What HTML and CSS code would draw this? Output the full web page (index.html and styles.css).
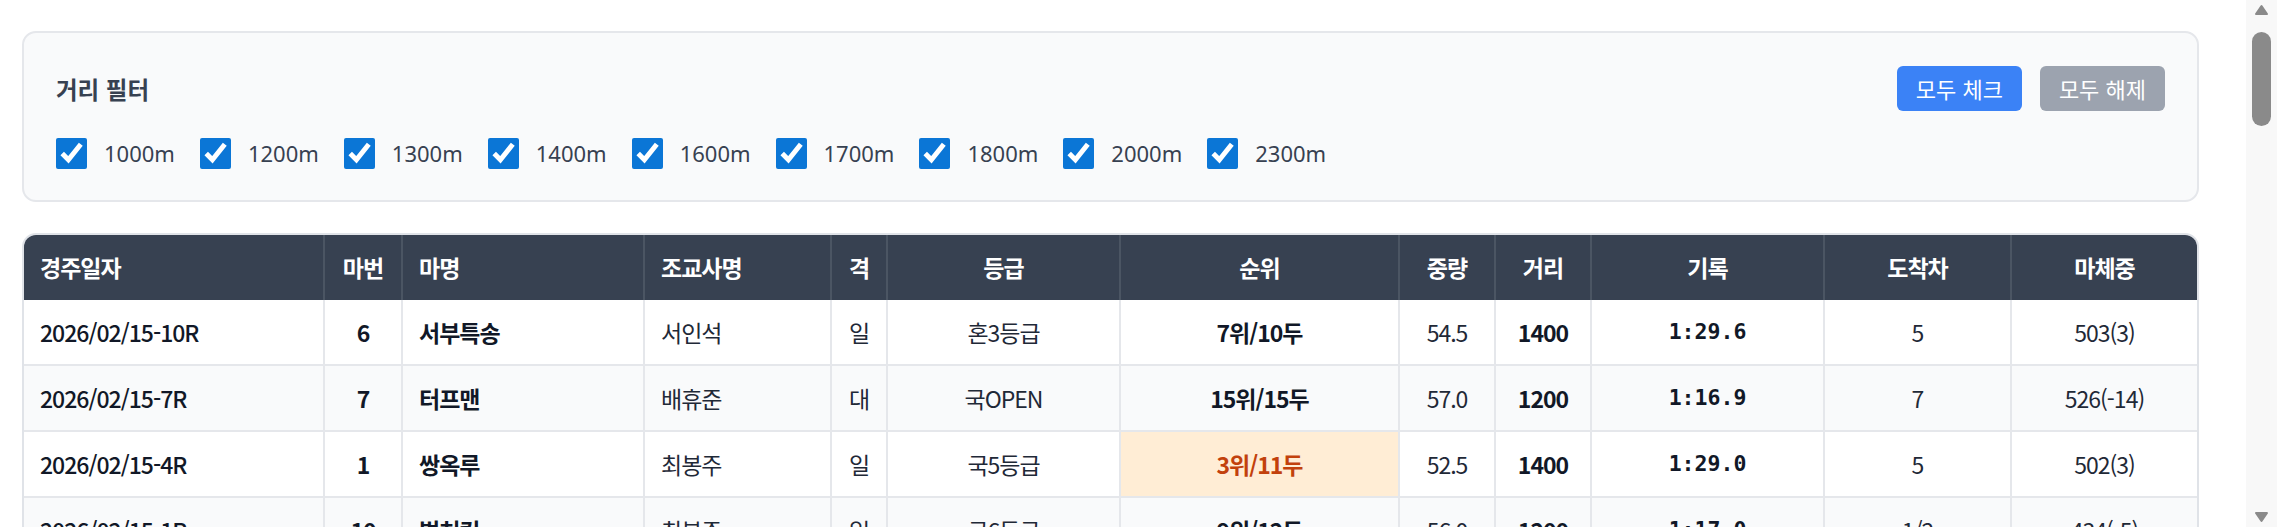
FILE: index.html
```html
<!DOCTYPE html>
<html lang="ko">
	<head>
		<meta charset="utf-8">
		<title>경주 기록</title>
		<link rel="stylesheet" href="styles.css">
	</head>
	<body>
		<div class="page">
			<div class="filter">
				<div class="filter-head">
					<span class="filter-title">거리 필터</span>
					<div class="filter-btns">
						<button class="btn btn-blue">모두 체크</button>
						<button class="btn btn-gray">모두 해제</button>
					</div>
				</div>
				<div class="dist-list">
					<label class="dist"><input type="checkbox" checked>1000m</label>
					<label class="dist"><input type="checkbox" checked>1200m</label>
					<label class="dist"><input type="checkbox" checked>1300m</label>
					<label class="dist"><input type="checkbox" checked>1400m</label>
					<label class="dist"><input type="checkbox" checked>1600m</label>
					<label class="dist"><input type="checkbox" checked>1700m</label>
					<label class="dist"><input type="checkbox" checked>1800m</label>
					<label class="dist"><input type="checkbox" checked>2000m</label>
					<label class="dist"><input type="checkbox" checked>2300m</label>
				</div>
			</div>

			<div class="result-wrap">
				<table class="result">
					<colgroup>
						<col class="w-date"><col class="w-no"><col class="w-horse"><col class="w-trainer">
						<col class="w-gyeok"><col class="w-grade"><col class="w-rank"><col class="w-wt">
						<col class="w-dist"><col class="w-time"><col class="w-gap"><col>
					</colgroup>
					<thead>
						<tr>
							<th class="l">경주일자</th><th>마번</th><th class="l">마명</th><th class="l">조교사명</th>
							<th>격</th><th>등급</th><th>순위</th><th>중량</th>
							<th>거리</th><th>기록</th><th>도착차</th><th>마체중</th>
						</tr>
					</thead>
					<tbody>
						<tr><td class="l date">2026/02/15-10R</td><td class="b">6</td><td class="l horse">서부특송</td><td class="l">서인석</td><td>일</td><td>혼3등급</td><td class="b">7위/10두</td><td>54.5</td><td class="b">1400</td><td class="time">1:29.6</td><td>5</td><td>503(3)</td></tr>
						<tr><td class="l date">2026/02/15-7R</td><td class="b">7</td><td class="l horse">터프맨</td><td class="l">배휴준</td><td>대</td><td>국OPEN</td><td class="b">15위/15두</td><td>57.0</td><td class="b">1200</td><td class="time">1:16.9</td><td>7</td><td>526(-14)</td></tr>
						<tr><td class="l date">2026/02/15-4R</td><td class="b">1</td><td class="l horse">쌍옥루</td><td class="l">최봉주</td><td>일</td><td>국5등급</td><td class="b top">3위/11두</td><td>52.5</td><td class="b">1400</td><td class="time">1:29.0</td><td>5</td><td>502(3)</td></tr>
						<tr><td class="l date">2026/02/15-1R</td><td class="b">10</td><td class="l horse">벌처킹</td><td class="l">최봉주</td><td>일</td><td>국6등급</td><td class="b">9위/12두</td><td>56.0</td><td class="b">1200</td><td class="time">1:17.0</td><td>1/2</td><td>434(-5)</td></tr>
						<tr><td class="l date">2026/02/14-11R</td><td class="b">3</td><td class="l horse">원더풀블레이드</td><td class="l">서인석</td><td>일</td><td>혼2등급</td><td class="b">4위/12두</td><td>55.0</td><td class="b">1600</td><td class="time">1:42.3</td><td>2</td><td>488(1)</td></tr>
						<tr><td class="l date">2026/02/14-8R</td><td class="b">5</td><td class="l horse">금빛질주</td><td class="l">배휴준</td><td>일</td><td>국4등급</td><td class="b top">1위/11두</td><td>54.0</td><td class="b">1300</td><td class="time">1:22.7</td><td>목</td><td>471(-2)</td></tr>
						<tr><td class="l date">2026/02/14-5R</td><td class="b">8</td><td class="l horse">한라의별</td><td class="l">최봉주</td><td>일</td><td>국5등급</td><td class="b">6위/10두</td><td>53.0</td><td class="b">1000</td><td class="time">1:02.4</td><td>3</td><td>455(4)</td></tr>
						<tr><td class="l date">2026/02/08-9R</td><td class="b">2</td><td class="l horse">서부특송</td><td class="l">서인석</td><td>일</td><td>혼3등급</td><td class="b top">2위/12두</td><td>54.5</td><td class="b">1400</td><td class="time">1:28.9</td><td>1</td><td>500(-2)</td></tr>
						<tr><td class="l date">2026/02/08-6R</td><td class="b">11</td><td class="l horse">바람의언덕</td><td class="l">배휴준</td><td>일</td><td>국3등급</td><td class="b">8위/13두</td><td>55.5</td><td class="b">1800</td><td class="time">1:56.1</td><td>6</td><td>492(0)</td></tr>
						<tr><td class="l date">2026/02/07-10R</td><td class="b">4</td><td class="l horse">터프맨</td><td class="l">배휴준</td><td>대</td><td>국OPEN</td><td class="b">5위/14두</td><td>57.0</td><td class="b">2000</td><td class="time">2:07.8</td><td>4</td><td>540(6)</td></tr>
						<tr><td class="l date">2026/02/07-3R</td><td class="b">9</td><td class="l horse">쌍옥루</td><td class="l">최봉주</td><td>일</td><td>국5등급</td><td class="b">4위/10두</td><td>52.5</td><td class="b">1300</td><td class="time">1:21.9</td><td>2</td><td>499(-1)</td></tr>
						<tr><td class="l date">2026/02/01-7R</td><td class="b">6</td><td class="l horse">벌처킹</td><td class="l">최봉주</td><td>일</td><td>국6등급</td><td class="b top">1위/9두</td><td>55.0</td><td class="b">1000</td><td class="time">1:01.7</td><td>코</td><td>439(2)</td></tr>
						<tr><td class="l date">2026/02/01-2R</td><td class="b">12</td><td class="l horse">한라의별</td><td class="l">최봉주</td><td>일</td><td>국5등급</td><td class="b">10위/12두</td><td>53.5</td><td class="b">1200</td><td class="time">1:17.4</td><td>8</td><td>451(-3)</td></tr>
						<tr><td class="l date">2026/01/31-11R</td><td class="b">1</td><td class="l horse">원더풀블레이드</td><td class="l">서인석</td><td>대</td><td>혼1등급</td><td class="b">7위/14두</td><td>56.0</td><td class="b">2300</td><td class="time">2:29.5</td><td>5</td><td>487(-1)</td></tr>
						<tr><td class="l date">2026/01/31-6R</td><td class="b">7</td><td class="l horse">금빛질주</td><td class="l">배휴준</td><td>일</td><td>국4등급</td><td class="b">5위/12두</td><td>54.0</td><td class="b">1400</td><td class="time">1:28.6</td><td>3</td><td>473(5)</td></tr>
						<tr><td class="l date">2026/01/25-9R</td><td class="b">5</td><td class="l horse">바람의언덕</td><td class="l">배휴준</td><td>일</td><td>국3등급</td><td class="b top">3위/11두</td><td>55.5</td><td class="b">1700</td><td class="time">1:50.2</td><td>1½</td><td>492(-4)</td></tr>
						<tr><td class="l date">2026/01/25-4R</td><td class="b">3</td><td class="l horse">서부특송</td><td class="l">서인석</td><td>일</td><td>혼3등급</td><td class="b">6위/10두</td><td>54.0</td><td class="b">1600</td><td class="time">1:41.9</td><td>4</td><td>502(2)</td></tr>
						<tr><td class="l date">2026/01/24-8R</td><td class="b">8</td><td class="l horse">쌍옥루</td><td class="l">최봉주</td><td>일</td><td>국5등급</td><td class="b">9위/12두</td><td>52.0</td><td class="b">1200</td><td class="time">1:17.8</td><td>7</td><td>500(0)</td></tr>
						<tr><td class="l date">2026/01/18-10R</td><td class="b">2</td><td class="l horse">터프맨</td><td class="l">배휴준</td><td>대</td><td>국OPEN</td><td class="b">11위/14두</td><td>57.0</td><td class="b">1800</td><td class="time">1:54.6</td><td>9</td><td>534(-3)</td></tr>
						<tr><td class="l date">2026/01/18-5R</td><td class="b">10</td><td class="l horse">한라의별</td><td class="l">최봉주</td><td>일</td><td>국5등급</td><td class="b top">2위/11두</td><td>53.0</td><td class="b">1000</td><td class="time">1:01.9</td><td>머리</td><td>454(1)</td></tr>
						<tr><td class="l date">2026/01/17-7R</td><td class="b">4</td><td class="l horse">벌처킹</td><td class="l">최봉주</td><td>일</td><td>국6등급</td><td class="b">5위/10두</td><td>55.0</td><td class="b">1300</td><td class="time">1:22.5</td><td>3</td><td>437(-4)</td></tr>
						<tr><td class="l date">2026/01/11-11R</td><td class="b">6</td><td class="l horse">원더풀블레이드</td><td class="l">서인석</td><td>일</td><td>혼2등급</td><td class="b top">1위/12두</td><td>55.0</td><td class="b">1800</td><td class="time">1:53.8</td><td>1</td><td>488(3)</td></tr>
						<tr><td class="l date">2026/01/11-3R</td><td class="b">9</td><td class="l horse">금빛질주</td><td class="l">배휴준</td><td>일</td><td>국4등급</td><td class="b">8위/11두</td><td>54.5</td><td class="b">1200</td><td class="time">1:17.2</td><td>6</td><td>468(-1)</td></tr>
						<tr><td class="l date">2026/01/10-9R</td><td class="b">1</td><td class="l horse">바람의언덕</td><td class="l">배휴준</td><td>일</td><td>국3등급</td><td class="b">4위/13두</td><td>55.0</td><td class="b">2000</td><td class="time">2:08.3</td><td>2</td><td>496(2)</td></tr>
					</tbody>
				</table>
			</div>
		</div>

		<div class="scrollbar" aria-hidden="true">
			<svg class="sb-arrow" width="31" height="20" viewBox="0 0 31 20"><path d="M10 14 L15.5 6 L21 14 Z" fill="#8a8a8a" stroke="#8a8a8a" stroke-width="2" stroke-linejoin="round"/></svg>
			<div class="sb-thumb"></div>
			<div class="sb-track"></div>
			<svg class="sb-arrow" width="31" height="20" viewBox="0 0 31 20"><path d="M10 6 L15.5 14 L21 6 Z" fill="#8a8a8a" stroke="#8a8a8a" stroke-width="2" stroke-linejoin="round"/></svg>
		</div>
	</body>
</html>
```

FILE: styles.css
```css
* {
    box-sizing: border-box;
}
body {
    margin: 0;
    background: #fff;
    color: #1f2937;
    font-family: "Noto Sans CJK KR", "Noto Sans", sans-serif;
}
.page {
    padding: 31px 0 31px 22px;
}

/* 거리 필터 */
.filter {
    width: 2177px;
    background: #f9fafb;
    border: 2px solid #e5e7eb;
    border-radius: 14px;
    padding: 33px 32px 30px;
}
.filter-head {
    display: flex;
    justify-content: space-between;
    align-items: center;
}
.filter-title {
    font-size: 23.5px;
    font-weight: 700;
    color: #374151;
}
.filter-btns {
    display: flex;
    gap: 18px;
}
.btn {
    font-family: inherit;
    font-size: 22px;
    line-height: 31px;
    padding: 7px 19px;
    border: 0;
    border-radius: 6px;
    color: #fff;
    cursor: pointer;
}
.btn-blue {
    background: #3b82f6;
}
.btn-gray {
    background: #9ca3af;
}
.dist-list {
    display: flex;
    margin-top: 25px;
}
.dist {
    display: flex;
    align-items: center;
    margin-right: 25px;
    font-family: "Noto Sans", "Noto Sans CJK KR", sans-serif;
    font-size: 22px;
    line-height: 34px;
    color: #374151;
}
.dist input {
    width: 31px;
    height: 31px;
    margin: 0 17px 0 0;
    accent-color: #0b76d6;
}

/* 기록 표 */
.result-wrap {
    width: 2177px;
    margin-top: 31px;
    border: 2px solid #e0e3e8;
    border-radius: 14px;
    overflow: hidden;
}
.result {
    width: 100%;
    border-collapse: collapse;
    table-layout: fixed;
    font-size: 23px;
    letter-spacing: -1px;
}
.w-date { width: 300px; }
.w-no { width: 78px; }
.w-horse { width: 242px; }
.w-trainer { width: 187px; }
.w-gyeok { width: 56px; }
.w-grade { width: 233px; }
.w-rank { width: 279px; }
.w-wt { width: 96px; }
.w-dist { width: 96px; }
.w-time { width: 233px; }
.w-gap { width: 187px; }

.result th {
    background: #374151;
    color: #fff;
    font-weight: 700;
    line-height: 31px;
    padding: 17px 16px;
    text-align: center;
    border-right: 2px solid #4b5563;
}
.result th:last-child {
    border-right: 0;
}
.result td {
    line-height: 32px;
    padding: 16px 16px;
    text-align: center;
    border: 2px solid #e5e7eb;
    white-space: nowrap;
    color: #1f2937;
}
.result tr td:first-child {
    border-left: 0;
}
.result tr td:last-child {
    border-right: 0;
}
.result tbody tr:first-child td {
    border-top: 0;
}
.result tbody tr:nth-child(even) td {
    background: #f9fafb;
}
.result .l {
    text-align: left;
}
.result .b {
    font-weight: 700;
    color: #111827;
}
.result .date {
    font-weight: 500;
    color: #111827;
}
.result .horse {
    font-weight: 600;
    color: #111827;
}
.result .time {
    font-family: "DejaVu Sans Mono", "Liberation Mono", monospace;
    font-size: 21.5px;
    font-weight: 700;
    letter-spacing: 0;
    color: #111827;
}
.result td.top {
    background: #ffedd5 !important;
    color: #c2410c;
}

/* 세로 스크롤바 */
.scrollbar {
    position: fixed;
    top: 0;
    right: 0;
    width: 31px;
    height: 100vh;
    display: flex;
    flex-direction: column;
    background: #f8f8f8;
}
.sb-arrow {
    display: block;
    flex: none;
}
.sb-thumb {
    height: 94px;
    margin: 12px 6px 0;
    border-radius: 10px;
    background: #8a8a8a;
}
.sb-track {
    flex: 1;
}
```
